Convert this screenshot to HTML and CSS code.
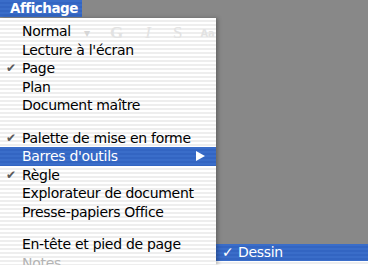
FILE: index.html
```html
<!DOCTYPE html>
<html lang="fr">
<head>
  <meta charset="UTF-8" />
  <title>Affichage</title>
  <link rel="stylesheet" href="styles.css">
</head>
<body>
  <div class="menubar">
    <div class="menu-title">Affichage</div>
  </div>

  <div class="desk">
    <div class="menu">
      <div class="backdrop">
        <div class="toolbar">
          <span class="tb-drop">▾</span>
          <span class="tb-g">G</span>
          <span class="tb-i">I</span>
          <span class="tb-s">S</span>
          <span class="tb-a">Aa</span>
        </div>
      </div>

      <div class="items">
        <div class="item">Normal</div>
        <div class="item">Lecture à l'écran</div>
        <div class="item checked">Page</div>
        <div class="item">Plan</div>
        <div class="item">Document maître</div>
        <div class="separator"></div>
        <div class="item checked">Palette de mise en forme</div>
        <div class="item selected">
          Barres d'outils
          <svg class="arrow" width="9" height="10" viewBox="0 0 9 10"><polygon points="0,0 9,5 0,10" fill="#fff"/></svg>
        </div>
        <div class="item checked">Règle</div>
        <div class="item">Explorateur de document</div>
        <div class="item">Presse-papiers Office</div>
        <div class="separator"></div>
        <div class="item">En-tête et pied de page</div>
        <div class="item disabled">Notes</div>
      </div>
    </div>

    <div class="side">
      <div class="submenu">
        <div class="sub-item selected"><span class="tick">✓</span>Dessin</div>
      </div>
    </div>
  </div>
</body>
</html>
```

FILE: styles.css
```css
body {
  margin: 0;
  height: 265px;
  overflow: hidden;
  background: #888888;
  font-family: 'DejaVu Sans', 'Liberation Sans', sans-serif;
  font-size: 14px;
  letter-spacing: -0.3px;
  display: flex;
  flex-direction: column;
}

.menubar {
  height: 18px;
  display: flex;
}

.menu-title {
  width: 72px;
  padding-left: 10px;
  height: 17px;
  line-height: 17px;
  color: #fff;
  font-size: 13.5px;
  font-weight: bold;
  letter-spacing: -0.5px;
  background: repeating-linear-gradient(to bottom, #3a6dc9 0, #3a6dc9 2px, #3365c2 2px, #3365c2 4px);
}

.desk {
  flex: 1;
  display: flex;
  min-height: 0;
}

.menu {
  position: relative;
  width: 216px;
  background: repeating-linear-gradient(to bottom, #ffffff 0, #ffffff 2px, #eeeeee 2px, #eeeeee 4px);
  box-shadow: 2px 0 4px rgba(0, 0, 0, 0.25);
  overflow: hidden;
}

/* document toolbar showing through the translucent menu */
.backdrop {
  position: absolute;
  inset: 0;
  color: #e2e2e2;
  font-family: 'Liberation Serif', serif;
  letter-spacing: 0;
}

.toolbar {
  display: flex;
  align-items: center;
  height: 26px;
  padding-top: 2px;
  font-size: 17px;
}

.tb-drop { margin-left: 84px; font-size: 12px; color: #d6d6d6; }
.tb-g { margin-left: 20px; font-weight: bold; }
.tb-i { margin-left: 22px; font-style: italic; }
.tb-s { margin-left: 22px; }
.tb-a { margin-left: 18px; font-family: 'DejaVu Sans Condensed', sans-serif; font-size: 11px; font-weight: bold; }

.items {
  position: relative;
  padding-top: 4px;
}

.item {
  position: relative;
  height: 18.5px;
  line-height: 18.5px;
  padding-left: 22px;
  color: #000;
}

.item.checked::before {
  content: '✔';
  position: absolute;
  left: 6px;
  color: #5a5a5a;
  font-size: 12px;
}

.item.selected {
  color: #fff;
  background: repeating-linear-gradient(to bottom, #3a6dc9 0, #3a6dc9 2px, #3365c2 2px, #3365c2 4px);
}

.item.disabled {
  color: #b4b4b4;
}

.arrow {
  position: absolute;
  right: 11px;
  top: 4px;
}

.separator {
  height: 14px;
}

.side {
  flex: 1;
  display: flex;
  flex-direction: column;
  justify-content: flex-end;
}

.submenu {
  height: 21px;
  background: repeating-linear-gradient(to bottom, #ffffff 0, #ffffff 2px, #eeeeee 2px, #eeeeee 4px);
}

.sub-item {
  height: 17px;
  line-height: 17px;
  padding-left: 6px;
}

.sub-item.selected {
  color: #fff;
  background: repeating-linear-gradient(to bottom, #3a6dc9 0, #3a6dc9 2px, #3365c2 2px, #3365c2 4px);
}

.tick {
  display: inline-block;
  width: 16px;
  font-weight: bold;
}
```
